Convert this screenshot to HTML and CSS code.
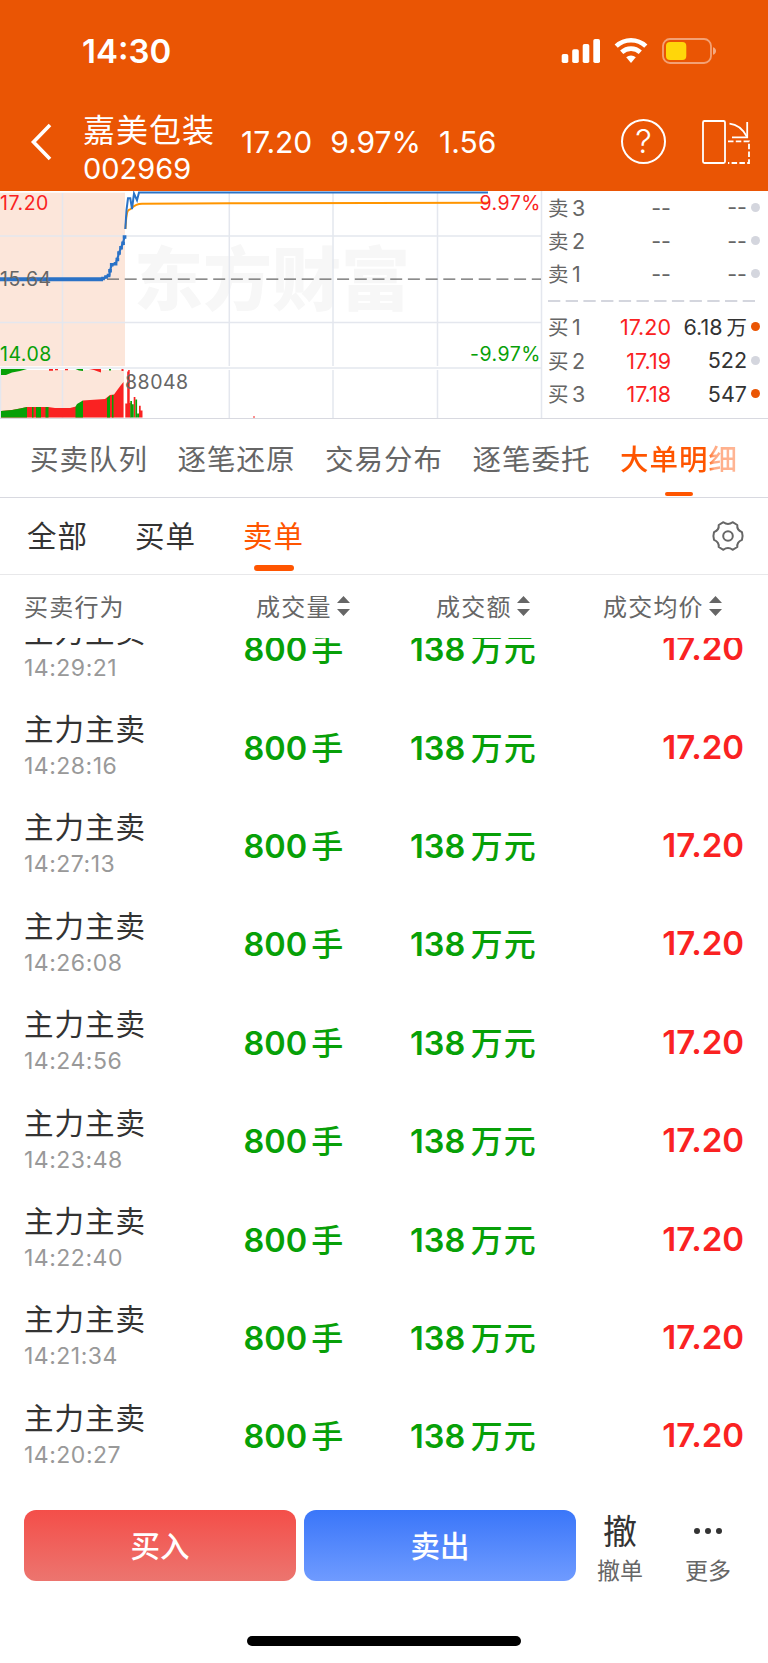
FILE: index.html
```html
<!DOCTYPE html>
<html lang="zh-CN">
<head>
  <meta charset="UTF-8">
  <title>嘉美包装 002969</title>
  <link rel="stylesheet" href="styles.css">
</head>
<body>
  <header class="header">
    <div class="status-bar">
      <span class="clock">14:30</span>
      <svg class="status-icons" width="156" height="28" viewBox="0 0 156 28">
        <g fill="#fff">
          <rect x="0.7" y="17" width="6.6" height="9" rx="1.8"/>
          <rect x="11.2" y="12.3" width="6.6" height="13.7" rx="1.8"/>
          <rect x="21.7" y="7" width="6.6" height="19" rx="1.8"/>
          <rect x="32.3" y="2" width="6.7" height="24" rx="1.8"/>
        </g>
        <g fill="none" stroke="#fff" stroke-width="4.6">
          <path d="M55.2 9.2a21.5 21.5 0 0 1 29.6 0"/>
          <path d="M60.7 15.3a13.6 13.6 0 0 1 18.6 0"/>
        </g>
        <path d="M65.2 20.3a7.2 7.2 0 0 1 9.6 0L70 26z" fill="#fff"/>
        <rect x="102" y="2" width="48" height="24" rx="7" fill="none" stroke="#fff" stroke-opacity=".45" stroke-width="1.8"/>
        <path d="M152 10.2q3 1 3 3.8t-3 3.8z" fill="#fff" fill-opacity=".5"/>
        <rect x="105" y="5" width="20.3" height="18" rx="4" fill="#ffd60a"/>
      </svg>
    </div>
    <div class="nav">
      <svg class="back" width="22" height="38" viewBox="0 0 22 38">
        <path d="M20 2L3.500 19L20 36" fill="none" stroke="#fff" stroke-width="3.6"/>
      </svg>
      <div class="stock">
        <div class="stock-name">嘉美包装</div>
        <div class="stock-code">002969</div>
      </div>
      <div class="quote">
        <span>17.20</span>
        <span>9.97%</span>
        <span>1.56</span>
      </div>
      <div class="help">?</div>
      <svg class="rotate" width="50" height="46" viewBox="0 0 50 46" fill="none" stroke="#fff" stroke-width="1.8">
        <rect x="2" y="2" width="22" height="42" rx="1.500"/>
        <path d="M28.500 4.700q11 1 17.300 13"/>
        <path d="M46.200 3v15.300H31"/>
        <path d="M27 22.300h21V44H27" stroke-dasharray="5.5 2.3"/>
      </svg>
    </div>
  </header>

  <section class="market">
    <svg class="chart" width="543" height="228" viewBox="0 0 543 228">
      <text class="watermark" x="134" y="114">东方财富</text>
      <!-- call auction area -->
      <rect x="0" y="1.700" width="125" height="173.500" fill="#fce6da"/>
      <rect x="0" y="179" width="124" height="47.500" fill="#fce6da"/>
      <g stroke="#e4e7ee" stroke-width="1.500">
        <path d="M62.500 2V175M229.300 2V175M333 2V175M437.500 2V175M541.500 0V227"/>
        <path d="M62.500 179V227M229.300 179V227M333 179V227M437.500 179V227M.5 179V227"/>
        <path d="M0 45H541M0 131.500H541M0 177H541"/>
      </g>
      <path d="M107 88.200H541" stroke="#666" stroke-width="1.300" stroke-dasharray="12 5.700" fill="none"/>
      <path d="M125.500 38C126 28 127 20 128.700 19C133 18 132 13 142 12.700L230 12.300L488 11.800" stroke="#ff9500" stroke-width="1.900" fill="none"/>
      <path d="M125.300 38L126.500 19L128 7.300H130.300L132 18L134 2.500L137 9.300L139 1.500H488" stroke="#2a72c6" stroke-width="2" fill="none"/>
      <path d="M0 88.200H103" stroke="#2a72c6" stroke-width="4" fill="none"/>
      <path d="M102 88.200L106 86L109.300 84.500L110 79.700L111.700 73.700L115.700 72.700L117.300 68L119 62L121 56.700L123 52.300L124.500 45.700" stroke="#2a72c6" stroke-width="2.200" fill="none"/>
      <path d="M103 87.500h.1M106 86h.1M108.500 84.500h.1M110 79.700h.1M111.700 73.700h.1M115.500 72.700h.1M117.300 68.500h.1M119 62h.1M121 56.700h.1M123 52.300h.1M124.500 46h.1" stroke="#2a72c6" stroke-width="3.600" stroke-linecap="square"/>
      <!-- unmatched volume -->
      <path d="M1 178H27L20 180L12 181.500L6 184H1zM75.500 178H83V180L79 179.500zM109 178h2v1.500h-2z" fill="#07a007"/>
      <path d="M49 178h4v1.800h-4zM55 178h3v1.300h-3zM65 178h3v1.300h-3zM89 178H101V181.500L98 180.500L94 179zM121.500 178h2v2h-2z" fill="#fa2222"/>
      <!-- volume -->
      <path d="M1 226.500V220L12 219L20 217.500L27 216H48L55 217H70L76 215.500L83 209.500L90 209L105 208L110 204L114 203.500L118 198L121 194L123.500 191V226.500z" fill="#fa2222"/>
      <path d="M1 226.500V220L12 219L20 217.500L27 216V226.500zM32 216h1.500v10.500H32zM36 216h5v10.500h-5zM45.500 216h3v10.500h-3zM75.500 215.700L77 213L83 209.500V226.500H75.500zM107 207L110 204.500V226.500H107zM112 204h1.500v22.500H112z" fill="#07a007"/>
      <path d="M125.300 212.500h1.900v14h-1.900zM127.200 180.500h1v-1.500h1.500v33h1v14.500h-3.500zM133.700 206h1.700v20.500h-1.700zM139 214.800h1.700v11.700h-1.700zM140.700 219.500h1.800v7h-1.800zM253 225.500h2v1h-2z" fill="#fa2222"/>
      <path d="M130.300 210h1.700v16.500h-1.700zM132 213.300h1.700v13.200h-1.700zM135.400 208.500h1.700v18h-1.700zM137.200 222.500h1.800v4h-1.800z" fill="#07a007"/>
      <text class="axis up" x="0" y="18.500">17.20</text>
      <text class="axis" x="0" y="94.500">15.64</text>
      <text class="axis down" x="0" y="169.500">14.08</text>
      <text class="axis" x="125" y="197.500">88048</text>
      <text class="axis up" x="541" y="18.500" text-anchor="end">9.97%</text>
      <text class="axis down" x="541" y="169.500" text-anchor="end">-9.97%</text>
    </svg>
    <div class="order-book">
      <div class="level"><span class="cn">卖</span><span class="no">3</span><span class="price">--</span><span class="amount">--</span><i class="dot"></i></div>
      <div class="level"><span class="cn">卖</span><span class="no">2</span><span class="price">--</span><span class="amount">--</span><i class="dot"></i></div>
      <div class="level"><span class="cn">卖</span><span class="no">1</span><span class="price">--</span><span class="amount">--</span><i class="dot"></i></div>
      <svg class="divider" width="208" height="2"><path d="M0 1H208" stroke="#d4d6de" stroke-width="2" stroke-dasharray="12.300 5.400"/></svg>
      <div class="level buy"><span class="cn">买</span><span class="no">1</span><span class="price">17.20</span><span class="amount">6.18<b>万</b></span><i class="dot on"></i></div>
      <div class="level buy"><span class="cn">买</span><span class="no">2</span><span class="price">17.19</span><span class="amount">522</span><i class="dot"></i></div>
      <div class="level buy"><span class="cn">买</span><span class="no">3</span><span class="price">17.18</span><span class="amount">547</span><i class="dot on"></i></div>
    </div>
  </section>

  <nav class="tabs">
    <a class="tab">买卖队列</a>
    <a class="tab">逐笔还原</a>
    <a class="tab">交易分布</a>
    <a class="tab">逐笔委托</a>
    <a class="tab active">大单明细</a>
  </nav>

  <div class="filters">
    <a class="filter">全部</a>
    <a class="filter">买单</a>
    <a class="filter active">卖单</a>
    <svg class="gear" width="34" height="32" viewBox="0 0 34 32" fill="none" stroke="#666" stroke-width="2" stroke-linejoin="round">
      <path d="M12.400 2.200Q17 5.600 21.600 2.200L26.300 5Q25.700 10 31 12.200Q32.200 16 31 19.800Q25.700 22 26.300 27L21.600 29.800Q17 26.400 12.400 29.800L7.700 27Q8.300 22 3 19.800Q1.800 16 3 12.200Q8.300 10 7.700 5z"/>
      <circle cx="17" cy="16" r="4.800"/>
    </svg>
  </div>

  <div class="columns">
    <span>买卖行为</span>
    <span>成交量<svg class="sort" width="13" height="22" viewBox="0 0 13 22"><path d="M0 8L6.500 1L13 8zM0 14H13L6.500 21z"/></svg></span>
    <span>成交额<svg class="sort" width="13" height="22" viewBox="0 0 13 22"><path d="M0 8L6.500 1L13 8zM0 14H13L6.500 21z"/></svg></span>
    <span>成交均价<svg class="sort" width="13" height="22" viewBox="0 0 13 22"><path d="M0 8L6.500 1L13 8zM0 14H13L6.500 21z"/></svg></span>
  </div>

  <main class="deals">
    <div class="deal">
      <div><div class="action">主力主卖</div><div class="time">14:29:21</div></div>
      <div class="num">800<span>手</span></div><div class="num">138<span>万元</span></div><div class="avg">17.20</div>
    </div>
    <div class="deal">
      <div><div class="action">主力主卖</div><div class="time">14:28:16</div></div>
      <div class="num">800<span>手</span></div><div class="num">138<span>万元</span></div><div class="avg">17.20</div>
    </div>
    <div class="deal">
      <div><div class="action">主力主卖</div><div class="time">14:27:13</div></div>
      <div class="num">800<span>手</span></div><div class="num">138<span>万元</span></div><div class="avg">17.20</div>
    </div>
    <div class="deal">
      <div><div class="action">主力主卖</div><div class="time">14:26:08</div></div>
      <div class="num">800<span>手</span></div><div class="num">138<span>万元</span></div><div class="avg">17.20</div>
    </div>
    <div class="deal">
      <div><div class="action">主力主卖</div><div class="time">14:24:56</div></div>
      <div class="num">800<span>手</span></div><div class="num">138<span>万元</span></div><div class="avg">17.20</div>
    </div>
    <div class="deal">
      <div><div class="action">主力主卖</div><div class="time">14:23:48</div></div>
      <div class="num">800<span>手</span></div><div class="num">138<span>万元</span></div><div class="avg">17.20</div>
    </div>
    <div class="deal">
      <div><div class="action">主力主卖</div><div class="time">14:22:40</div></div>
      <div class="num">800<span>手</span></div><div class="num">138<span>万元</span></div><div class="avg">17.20</div>
    </div>
    <div class="deal">
      <div><div class="action">主力主卖</div><div class="time">14:21:34</div></div>
      <div class="num">800<span>手</span></div><div class="num">138<span>万元</span></div><div class="avg">17.20</div>
    </div>
    <div class="deal">
      <div><div class="action">主力主卖</div><div class="time">14:20:27</div></div>
      <div class="num">800<span>手</span></div><div class="num">138<span>万元</span></div><div class="avg">17.20</div>
    </div>
  </main>

  <footer class="footer">
    <button class="btn btn-buy">买入</button>
    <button class="btn btn-sell">卖出</button>
    <div class="tool">
      <div class="tool-icon cancel">撤</div>
      <div class="tool-label">撤单</div>
    </div>
    <div class="tool">
      <div class="tool-icon">
        <svg width="30" height="8" viewBox="0 0 30 8" fill="#333"><circle cx="4" cy="4" r="3"/><circle cx="15" cy="4" r="3"/><circle cx="26" cy="4" r="3"/></svg>
      </div>
      <div class="tool-label">更多</div>
    </div>
  </footer>
  <div class="home-bar"></div>
</body>
</html>
```
FILE: styles.css
```css
* {
  box-sizing: border-box;
}

body {
  margin: 0;
  width: 768px;
  height: 1663px;
  overflow: hidden;
  background: #fff;
  color: #333;
  font-family: Inter, "Noto Sans CJK SC", sans-serif;
  display: flex;
  flex-direction: column;
}

.header {
  height: 191px;
  flex: none;
  background: #ea5504;
  color: #fff;
}

.status-bar {
  height: 93px;
  padding: 9px 51px 0 82px;
  display: flex;
  align-items: center;
  justify-content: space-between;
}

.clock {
  font-size: 33px;
  font-weight: 600;
  line-height: 40px;
}

.nav {
  height: 98px;
  padding: 0 17px 0 30px;
  display: flex;
  align-items: center;
}

.back {
  flex: none;
  margin-right: 31px;
}

.stock {
  width: 158px;
  padding-top: 15px;
}

.stock-name {
  font-size: 32px;
  line-height: 38px;
  letter-spacing: 1px;
}

.stock-code {
  font-size: 29px;
  line-height: 38px;
}

.quote {
  flex: 1;
  display: flex;
  gap: 18px;
  font-size: 30px;
}

.help {
  width: 45px;
  height: 45px;
  margin: 0 35px 1px 0;
  border: 2px solid #fff;
  border-radius: 50%;
  font-size: 33px;
  font-weight: 300;
  line-height: 41px;
  text-align: center;
}

.rotate {
  margin-bottom: 1px;
}

.market {
  height: 228px;
  flex: none;
  display: flex;
  border-bottom: 1px solid #d8d9e0;
}

.chart {
  flex: none;
}

.watermark {
  font-size: 69px;
  font-weight: 900;
  fill: #f7f7f7;
}

.axis {
  font-size: 19.5px;
  letter-spacing: .5px;
  fill: #666;
}

.axis.up {
  fill: #fa2222;
}

.axis.down {
  fill: #07a007;
}

.order-book {
  flex: 1;
  padding: 0 8px 0 5px;
}

.level {
  height: 33.4px;
  display: flex;
  align-items: center;
  font-size: 21.5px;
  color: #666;
}

.level .cn {
  width: 24px;
  margin-bottom: 2px;
  font-size: 20.5px;
}

.level .price {
  margin-left: auto;
}

.level .amount {
  width: 76px;
  text-align: right;
  white-space: nowrap;
  line-height: 33px;
}

.level .amount b {
  font-weight: 400;
  font-size: 20.5px;
  line-height: 1;
  margin-left: 4px;
}

.level.buy .price {
  color: #fa2222;
}

.level.buy .amount {
  color: #333;
}

.dot {
  width: 9px;
  height: 9px;
  margin: 0 0 1px 4px;
  border-radius: 50%;
  background: #d4d6de;
}

.dot.on {
  background: #ea5504;
}

.divider {
  display: block;
  margin: 9px 0 8.5px;
}

.tabs {
  height: 79px;
  flex: none;
  padding: 0 30px;
  display: flex;
  gap: 29.5px;
  border-bottom: 1px solid #d8d9e0;
}

.tab {
  display: flex;
  flex-direction: column;
  align-items: center;
  font-size: 28.5px;
  letter-spacing: 1px;
  line-height: 82px;
  color: #666;
  white-space: nowrap;
}

.tab.active {
  font-weight: 500;
  color: transparent;
  background: linear-gradient(90deg, #ff5500 74%, #ffab85 80%, #ffb797);
  background-clip: text;
}

.tab.active::after {
  content: "";
  width: 28px;
  height: 4px;
  margin-top: -9px;
  border-radius: 2px;
  background: #ff5500;
}

.filters {
  height: 77px;
  flex: none;
  padding: 0 23px 0 27px;
  display: flex;
  align-items: center;
  gap: 47px;
  border-bottom: 1px solid #e8e8ea;
}

.filter {
  height: 100%;
  display: flex;
  flex-direction: column;
  align-items: center;
  font-size: 29.5px;
  line-height: 76px;
  letter-spacing: 1px;
}

.filter.active {
  color: #ff5500;
}

.filter.active::after {
  content: "";
  width: 40px;
  height: 6px;
  margin-top: -9px;
  border-radius: 3px;
  background: #ff5500;
}

.gear {
  margin-left: auto;
}

.columns {
  height: 63px;
  flex: none;
  padding: 0 0 2px 24px;
  display: grid;
  grid-template-columns: 232px 180px 167px 1fr;
  align-items: center;
  font-size: 24px;
  letter-spacing: 1.2px;
  color: #666;
}

.columns span {
  display: flex;
  align-items: center;
}

.sort {
  margin: 1px 0 0 5px;
  fill: #666;
}

.deals {
  height: 855px;
  flex: none;
  overflow: hidden;
}

.deal {
  height: 98.4px;
  padding: 0 24px 0 24px;
  display: grid;
  grid-template-columns: 219.5px 166.5px 1fr auto;
  align-items: center;
}

.deal:first-child {
  margin-top: -38px;
}

.action {
  font-size: 29.5px;
  line-height: 37px;
  letter-spacing: 1px;
}

.time {
  font-size: 23px;
  line-height: 36px;
  letter-spacing: .5px;
  color: #999;
}

.num {
  padding-bottom: 4px;
  font-size: 32.5px;
  font-weight: 600;
  color: #07a007;
}

.num span {
  margin-left: 4px;
  font-size: 32px;
  font-weight: 500;
  letter-spacing: 1px;
}

.num + .num span {
  margin-left: 5.5px;
}

.avg {
  padding-bottom: 2px;
  font-size: 33px;
  font-weight: 600;
  color: #fa2222;
}

.footer {
  height: 143px;
  flex: none;
  padding: 17px 24px 0 24px;
  display: flex;
  align-items: flex-start;
}

.btn {
  flex: none;
  width: 272px;
  height: 71px;
  margin: 0 8px 0 0;
  padding: 0 0 4px;
  border: none;
  border-radius: 12px;
  color: #fff;
  font-family: inherit;
  font-size: 29.5px;
  font-weight: 500;
}

.btn-buy {
  background: linear-gradient(#f44e49, #ec756f);
}

.btn-sell {
  background: linear-gradient(#3a76f9, #6f9bff);
}

.tool {
  width: 72px;
  text-align: center;
}

.tool + .tool {
  margin-left: auto;
}

.tool-icon {
  height: 42px;
  display: flex;
  align-items: center;
  justify-content: center;
  font-size: 34px;
}

.tool-icon.cancel {
  padding-bottom: 4px;
}

.tool-label {
  font-size: 23px;
  line-height: 38px;
  color: #666;
}

.home-bar {
  width: 274px;
  height: 10px;
  flex: none;
  margin: 0 auto;
  border-radius: 5px;
  background: #000;
}
```
